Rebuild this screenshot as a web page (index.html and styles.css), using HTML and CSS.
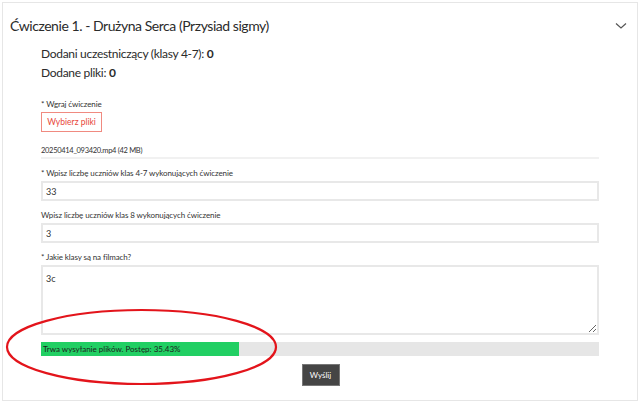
FILE: index.html
```html
<!DOCTYPE html>
<html lang="pl">
<head>
    <meta charset="UTF-8">
    <meta name="viewport" content="width=device-width, initial-scale=1.0">
    <title>Ćwiczenie 1.</title>
    <link rel="stylesheet" href="styles.css">
</head>
<body>
    <div class="card">
        <div class="card-header">
            <h2>Ćwiczenie 1. - Drużyna Serca (Przysiad sigmy)</h2>
            <svg class="chevron" width="12" height="8" viewBox="0 0 12 8">
                <path d="M1 1.5 L6 6 L11 1.5" fill="none" stroke="#555" stroke-width="1.2"/>
            </svg>
        </div>
        <div class="card-body">
            <div class="stats">
                <p>Dodani uczestniczący (klasy 4-7): <b>0</b></p>
                <p>Dodane pliki: <b>0</b></p>
            </div>

            <label class="field-label">* Wgraj ćwiczenie</label>
            <button class="pick-btn">Wybierz pliki</button>
            <div class="file-row">20250414_093420.mp4 (42 MB)</div>

            <label class="field-label">* Wpisz liczbę uczniów klas 4-7 wykonujących ćwiczenie</label>
            <input class="field" type="text" value="33">

            <label class="field-label">Wpisz liczbę uczniów klas 8 wykonujących ćwiczenie</label>
            <input class="field" type="text" value="3">

            <label class="field-label">* Jakie klasy są na filmach?</label>
            <textarea class="field area">3c</textarea>

            <div class="progress">
                <div class="progress-fill" style="width: 35.43%">Trwa wysyłanie plików. Postęp: 35.43%</div>
            </div>

            <div class="actions">
                <button class="send-btn">Wyślij</button>
            </div>
        </div>
    </div>
    <svg class="mark" width="300" height="90" viewBox="0 0 300 90">
        <ellipse cx="139.5" cy="43" rx="134.5" ry="37" fill="none" stroke="#e3141b" stroke-width="2.2"/>
    </svg>
</body>
</html>
```

FILE: styles.css
```css
* {
box-sizing: border-box;
margin: 0;
padding: 0;
}

body {
font-family: "Lato", "Noto Sans", sans-serif;
color: #333;
background: #fff;
width: 640px;
height: 403px;
position: relative;
overflow: hidden;
}

.card {
margin: 2px 0 0 2px;
width: 636px;
height: 399px;
border: 1px solid #e6e6e6;
}

.card-header {
display: flex;
justify-content: space-between;
align-items: center;
padding: 5px 10px 0 7px;
height: 41px;
}

.card-header h2 {
font-size: 14px;
font-weight: 400;
line-height: 18px;
letter-spacing: -0.45px;
color: #2b2b2b;
}

.chevron {
margin-top: -1px;
}

.card-body {
padding: 0 38px;
}

.stats p {
font-size: 12px;
line-height: 19px;
letter-spacing: -0.3px;
color: #2b2b2b;
}

.stats {
margin-bottom: 16px;
}

.field-label {
display: block;
font-size: 8px;
line-height: 12px;
letter-spacing: -0.1px;
color: #333;
margin-bottom: 2px;
}

.pick-btn {
display: block;
height: 20px;
width: 61px;
font-family: inherit;
font-size: 8.5px;
color: #e8483a;
background: #fff;
border: 1px solid #f08a80;
}

.file-row {
margin-top: 13px;
font-size: 7.5px;
line-height: 12px;
letter-spacing: -0.3px;
border-bottom: 2px solid #f1f1f1;
margin-bottom: 8px;
}

.field {
display: block;
width: 100%;
height: 20px;
border: 2px solid #e8e8e8;
padding: 0 3px;
font-family: inherit;
font-size: 9px;
color: #333;
margin-bottom: 8px;
outline: none;
}

.area {
height: 70px;
padding: 6px 3px;
resize: vertical;
}

.progress {
height: 14px;
background: #e6e6e6;
margin-top: -1px;
}

.progress-fill {
height: 100%;
background: #21cf63;
font-size: 8px;
line-height: 14px;
padding-left: 2px;
white-space: nowrap;
color: #1d1d1d;
}

.actions {
display: flex;
justify-content: center;
padding-left: 1px;
margin-top: 8px;
}

.send-btn {
height: 22px;
width: 38px;
background: #454545;
color: #fff;
border: 1px solid #777;
font-family: inherit;
font-size: 8px;
}

.mark {
position: absolute;
left: 2px;
top: 304px;
}
```
